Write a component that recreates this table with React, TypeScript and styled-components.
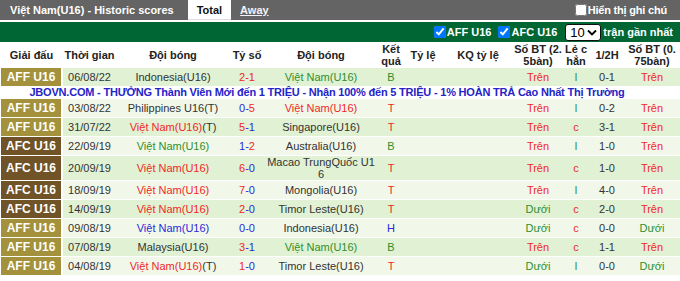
import React from 'react';
import styled, { createGlobalStyle } from 'styled-components';

type Tone = 'dark' | 'red' | 'green' | 'blue';

const TONES: Record<Tone, string> = {
  dark: '#333333',
  red: '#f02828',
  green: '#2f8f2f',
  blue: '#2a2ad8',
};

interface Part {
  text: string;
  tone: Tone;
}

interface Match {
  league: 'AFF' | 'AFC';
  date: string;
  home: Part[];
  score: Part[];
  away: Part[];
  result: Part;
  goals: Part;
  oddEven: Part;
  half: string;
  goals75: Part;
}

const GlobalStyle = createGlobalStyle`
  body {
    margin: 0;
    background: #fff;
    font-family: "Liberation Sans", Arial, sans-serif;
    font-size: 11px;
  }
`;

const Page = styled.div`
  width: 680px;
`;

const TopBar = styled.div`
  display: flex;
  align-items: stretch;
  height: 20px;
  background: #646464;
  color: #fff;
  font-weight: bold;
  line-height: 20px;
`;

const TitleTab = styled.div`
  padding: 0 14px 0 10px;
`;

const Tab = styled.div<{ $active?: boolean }>`
  padding: 0 9px;
  background: ${(p) => (p.$active ? '#fff' : 'transparent')};
  color: ${(p) => (p.$active ? '#111' : '#f2f2f8')};
  text-decoration: ${(p) => (p.$active ? 'none' : 'underline')};
  border-bottom: ${(p) => (p.$active ? '1px solid #ddd' : 'none')};
`;

const NoteToggle = styled.label`
  margin-left: auto;
  padding-right: 13px;
  display: flex;
  align-items: center;
  letter-spacing: -0.2px;
`;

const Check = styled.input`
  width: 12px;
  height: 12px;
  margin: 0 1px 0 0;
`;

const FilterBar = styled.div`
  margin-top: 2px;
  height: 20px;
  background: #006633;
  color: #fff;
  font-weight: bold;
  display: flex;
  align-items: center;
  justify-content: flex-end;
  padding-right: 7px;
`;

const FilterItem = styled.label`
  display: flex;
  align-items: center;
  margin-left: 7px;
`;

const Picker = styled.div`
  box-sizing: border-box;
  display: flex;
  align-items: center;
  justify-content: space-between;
  width: 36px;
  height: 17px;
  margin: 0 2px 0 8px;
  padding: 0 3px 0 4px;
  border: 1px solid #111;
  border-radius: 3px;
  background: #fff;
  color: #000;
  font-weight: normal;
  font-size: 13px;
`;

const Table = styled.table`
  width: 680px;
  table-layout: fixed;
  border-collapse: separate;
  border-spacing: 0;
`;

const HeadCell = styled.th`
  height: 26px;
  padding: 0;
  font-weight: bold;
  color: #222;
  line-height: 12px;
  text-align: center;
  vertical-align: middle;
`;

const Row = styled.tr<{ $shade: boolean }>`
  background: ${(p) => (p.$shade ? '#e1f1d3' : '#f1f8ea')};
`;

const Cell = styled.td`
  height: 18px;
  padding: 0 1px;
  border-bottom: 1px solid #fff;
  line-height: 12px;
  text-align: center;
  vertical-align: middle;
  white-space: nowrap;
  color: #333;
`;

const LeagueCell = styled(Cell)<{ $league: 'AFF' | 'AFC' }>`
  background: ${(p) => (p.$league === 'AFF' ? '#a3913b' : '#705327')};
  color: #fff;
  font-weight: bold;
  font-size: 12px;
  border-left: 1px solid #fff;
  border-right: 2px solid #fff;
`;

const AdCell = styled.td`
  padding: 0 26px 1px 0;
  background: #fff;
  color: #2424c8;
  font-weight: bold;
  line-height: 11px;
  letter-spacing: -0.2px;
  text-align: center;
  white-space: nowrap;
`;

const Ink = styled.span<{ $tone: Tone }>`
  color: ${(p) => TONES[p.$tone]};
`;

const widths = [63, 53, 114, 34, 114, 26, 38, 72, 48, 28, 34, 56];

const headers: React.ReactNode[] = [
  'Giải đấu',
  'Thời gian',
  'Đội bóng',
  'Tỷ số',
  'Đội bóng',
  <>Kết<br />quả</>,
  'Tỷ lệ',
  'KQ tỷ lệ',
  <>Số BT (2.<br />5bàn)</>,
  <>Lẻ c<br />hẳn</>,
  '1/2H',
  <>Số BT (0.<br />75bàn)</>,
];

const vn = (tone: Tone): Part => ({ text: 'Việt Nam(U16)', tone });
const t = (text: string, tone: Tone = 'dark'): Part => ({ text, tone });
const tren = t('Trên', 'red');
const duoi = t('Dưới', 'green');
const le = t('l', 'green');
const chan = t('c', 'red');

const matches: Match[] = [
  { league: 'AFF', date: '06/08/22', home: [t('Indonesia(U16)')], score: [t('2-1', 'red')], away: [vn('green')], result: t('B', 'green'), goals: tren, oddEven: le, half: '0-1', goals75: tren },
  { league: 'AFF', date: '03/08/22', home: [t('Philippines U16(T)')], score: [t('0-', 'blue'), t('5', 'red')], away: [vn('red')], result: t('T', 'red'), goals: tren, oddEven: le, half: '0-2', goals75: tren },
  { league: 'AFF', date: '31/07/22', home: [vn('red'), t('(T)')], score: [t('5', 'red'), t('-1', 'blue')], away: [t('Singapore(U16)')], result: t('T', 'red'), goals: tren, oddEven: chan, half: '3-1', goals75: tren },
  { league: 'AFC', date: '22/09/19', home: [vn('green')], score: [t('1-', 'blue'), t('2', 'red')], away: [t('Australia(U16)')], result: t('B', 'green'), goals: tren, oddEven: le, half: '1-0', goals75: tren },
  { league: 'AFC', date: '20/09/19', home: [vn('red')], score: [t('6', 'red'), t('-0', 'blue')], away: [t('Macao TrungQuốc U1'), t('6')], result: t('T', 'red'), goals: tren, oddEven: chan, half: '1-0', goals75: tren },
  { league: 'AFC', date: '18/09/19', home: [vn('red')], score: [t('7', 'red'), t('-0', 'blue')], away: [t('Mongolia(U16)')], result: t('T', 'red'), goals: tren, oddEven: le, half: '4-0', goals75: tren },
  { league: 'AFC', date: '14/09/19', home: [vn('red')], score: [t('2', 'red'), t('-0', 'blue')], away: [t('Timor Leste(U16)')], result: t('T', 'red'), goals: duoi, oddEven: chan, half: '2-0', goals75: tren },
  { league: 'AFF', date: '09/08/19', home: [vn('blue')], score: [t('0-0', 'blue')], away: [t('Indonesia(U16)')], result: t('H', 'blue'), goals: duoi, oddEven: chan, half: '0-0', goals75: duoi },
  { league: 'AFF', date: '07/08/19', home: [t('Malaysia(U16)')], score: [t('3', 'red'), t('-1', 'blue')], away: [vn('green')], result: t('B', 'green'), goals: tren, oddEven: chan, half: '1-1', goals75: tren },
  { league: 'AFF', date: '04/08/19', home: [vn('red'), t('(T)')], score: [t('1', 'red'), t('-0', 'blue')], away: [t('Timor Leste(U16)')], result: t('T', 'red'), goals: duoi, oddEven: le, half: '0-0', goals75: duoi },
];

const ad =
  'JBOVN.COM - THƯỞNG Thành Viên Mới đến 1 TRIỆU - Nhận 100% đến 5 TRIỆU - 1% HOÀN TRẢ Cao Nhất Thị Trường';

function Parts({ parts }: { parts: Part[] }) {
  return (
    <>
      {parts.map((p, i) => (
        <Ink key={i} $tone={p.tone}>{p.text}</Ink>
      ))}
    </>
  );
}

// the Macao name breaks inside "U16" in the original, keep that break
function TeamName({ parts }: { parts: Part[] }) {
  if (parts[0].text.startsWith('Macao')) {
    return (
      <>
        <Ink $tone="dark">{parts[0].text}</Ink>
        <br />
        <Ink $tone="dark">{parts[1].text}</Ink>
      </>
    );
  }
  return <Parts parts={parts} />;
}

function MatchRow({ m, shade }: { m: Match; shade: boolean }) {
  return (
    <Row $shade={shade}>
      <LeagueCell $league={m.league}>{m.league} U16</LeagueCell>
      <Cell>{m.date}</Cell>
      <Cell><TeamName parts={m.home} /></Cell>
      <Cell><Parts parts={m.score} /></Cell>
      <Cell><TeamName parts={m.away} /></Cell>
      <Cell><Ink $tone={m.result.tone}>{m.result.text}</Ink></Cell>
      <Cell />
      <Cell />
      <Cell><Ink $tone={m.goals.tone}>{m.goals.text}</Ink></Cell>
      <Cell><Ink $tone={m.oddEven.tone}>{m.oddEven.text}</Ink></Cell>
      <Cell>{m.half}</Cell>
      <Cell><Ink $tone={m.goals75.tone}>{m.goals75.text}</Ink></Cell>
    </Row>
  );
}

export default function App() {
  return (
    <Page>
      <GlobalStyle />
      <TopBar>
        <TitleTab>Việt Nam(U16) - Historic scores</TitleTab>
        <Tab $active>Total</Tab>
        <Tab>Away</Tab>
        <NoteToggle>
          <Check type="checkbox" />
          Hiển thị ghi chú
        </NoteToggle>
      </TopBar>
      <FilterBar>
        <FilterItem>
          <Check type="checkbox" defaultChecked />
          AFF U16
        </FilterItem>
        <FilterItem>
          <Check type="checkbox" defaultChecked />
          AFC U16
        </FilterItem>
        <Picker>
          10
          <svg width="10" height="7" viewBox="0 0 10 7">
            <path d="M1 1.5 L5 5.5 L9 1.5" fill="none" stroke="#000" strokeWidth="1.8" />
          </svg>
        </Picker>
        trận gần nhất
      </FilterBar>
      <Table>
        <colgroup>
          {widths.map((w, i) => (
            <col key={i} style={{ width: w }} />
          ))}
        </colgroup>
        <thead>
          <tr>
            {headers.map((h, i) => (
              <HeadCell key={i}>{h}</HeadCell>
            ))}
          </tr>
        </thead>
        <tbody>
          <MatchRow m={matches[0]} shade />
          <tr>
            <AdCell colSpan={12}>{ad}</AdCell>
          </tr>
          {matches.slice(1).map((m, i) => (
            <MatchRow key={m.date} m={m} shade={i % 2 === 1} />
          ))}
        </tbody>
      </Table>
    </Page>
  );
}
